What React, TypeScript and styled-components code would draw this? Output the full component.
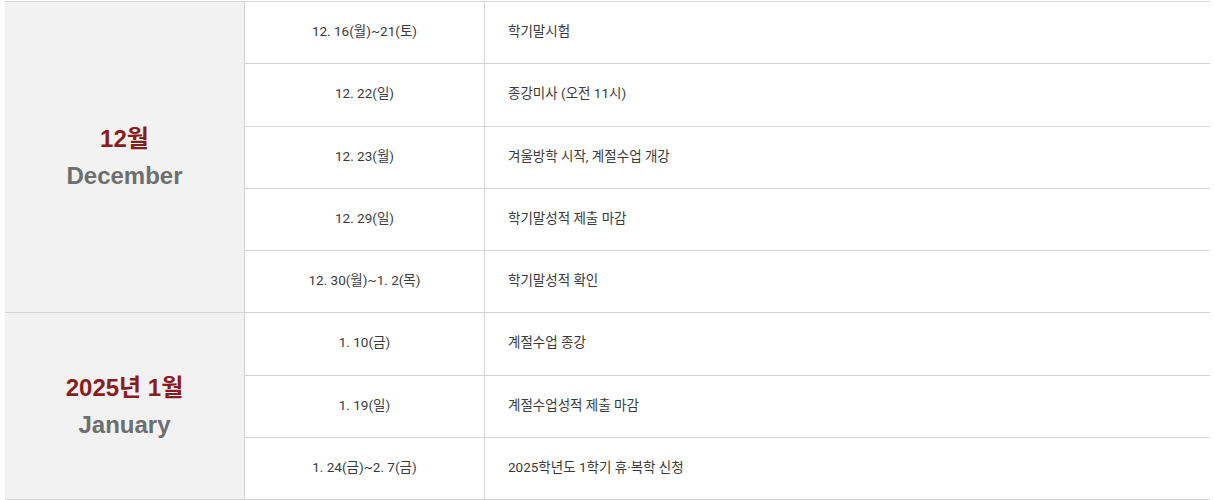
import styled, { createGlobalStyle } from "styled-components";

const GlobalStyle = createGlobalStyle`
  html, body {
    margin: 0;
    padding: 0;
    background: #ffffff;
  }
  body {
    font-family: Roboto, "Noto Sans CJK KR", sans-serif;
    color: #333333;
  }
`;

const Page = styled.div`
  padding: 1px 5px 0;
`;

const Schedule = styled.div`
  display: grid;
  grid-template-columns: 240px 240px 1fr;
  grid-template-rows: repeat(8, 1fr);
  height: 499px;
  box-sizing: border-box;
  border-top: 1px solid #d5d5d5;
`;

const MonthCell = styled.div<{ $span: number }>`
  grid-column: 1;
  grid-row: span ${(p) => p.$span};
  display: flex;
  flex-direction: column;
  align-items: center;
  justify-content: center;
  background: #f2f2f2;
  border-right: 1px solid #d5d5d5;
  border-bottom: 1px solid #d5d5d5;
  font-family: "Liberation Sans", "Noto Sans CJK KR", sans-serif;
  font-size: 24px;
  font-weight: 700;
  line-height: 37px;
`;

const MonthTitle = styled.span`
  color: #8a1c1c;
`;

const MonthName = styled.span`
  color: #6e6e6e;
`;

const DateCell = styled.div`
  grid-column: 2;
  display: flex;
  align-items: center;
  justify-content: center;
  padding-bottom: 5px;
  border-right: 1px solid #d5d5d5;
  border-bottom: 1px solid #d5d5d5;
  font-size: 13.5px;
  color: #3a3a3a;
`;

const EventCell = styled.div`
  grid-column: 3;
  display: flex;
  align-items: center;
  padding-left: 23px;
  padding-bottom: 5px;
  border-bottom: 1px solid #d5d5d5;
  font-size: 13.5px;
  color: #3a3a3a;
`;

type Entry = { date: string; event: string };
type Month = { title: string; name: string; entries: Entry[] };

const months: Month[] = [
  {
    title: "12월",
    name: "December",
    entries: [
      { date: "12. 16(월)~21(토)", event: "학기말시험" },
      { date: "12. 22(일)", event: "종강미사 (오전 11시)" },
      { date: "12. 23(월)", event: "겨울방학 시작, 계절수업 개강" },
      { date: "12. 29(일)", event: "학기말성적 제출 마감" },
      { date: "12. 30(월)~1. 2(목)", event: "학기말성적 확인" },
    ],
  },
  {
    title: "2025년 1월",
    name: "January",
    entries: [
      { date: "1. 10(금)", event: "계절수업 종강" },
      { date: "1. 19(일)", event: "계절수업성적 제출 마감" },
      { date: "1. 24(금)~2. 7(금)", event: "2025학년도 1학기 휴·복학 신청" },
    ],
  },
];

const App = () => (
  <Page>
    <GlobalStyle />
    <Schedule>
      {months.map((m) =>
        m.entries.map((e, i) => (
          <>
            {i === 0 && (
              <MonthCell key={m.title} $span={m.entries.length}>
                <MonthTitle>{m.title}</MonthTitle>
                <MonthName>{m.name}</MonthName>
              </MonthCell>
            )}
            <DateCell key={e.date + "d"}>{e.date}</DateCell>
            <EventCell key={e.date + "e"}>{e.event}</EventCell>
          </>
        ))
      )}
    </Schedule>
  </Page>
);

export default App;
